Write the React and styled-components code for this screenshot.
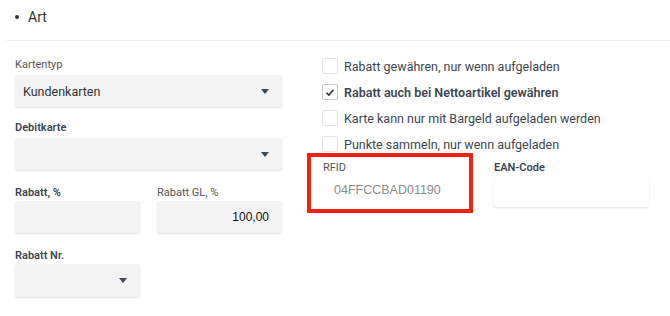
import React from 'react';
import styled, { createGlobalStyle } from 'styled-components';

const GlobalStyle = createGlobalStyle`
  body {
    margin: 0;
    background: #fff;
    font-family: Roboto, "Liberation Sans", sans-serif;
    color: #333;
  }
`;

const Page = styled.div`
  width: 670px;
  height: 316px;
  overflow: hidden;
`;

const Header = styled.div`
  display: flex;
  align-items: center;
  height: 34px;
  padding: 0 0 6px 9px;
  margin-left: 6px;
  border-bottom: 1px solid #f1f1f1;
  font-size: 14px;
  color: #333;
`;

const Bullet = styled.span`
  width: 4px;
  height: 4px;
  border-radius: 50%;
  background: #333;
  margin-right: 9px;
`;

const Body = styled.div`
  display: grid;
  grid-template-columns: 267px 1fr;
  column-gap: 25px;
  padding: 12px 0 0 15px;
`;

const Column = styled.div`
  display: flex;
  flex-direction: column;
  gap: 14px;
  padding-top: ${({ $offset }) => $offset || 0}px;
`;

const Row = styled.div`
  display: grid;
  grid-template-columns: ${({ $cols }) => $cols};
  column-gap: ${({ $gap }) => $gap}px;
  align-items: start;
  margin-top: ${({ $shift }) => $shift || 0}px;
`;

const Field = styled.div`
  display: flex;
  flex-direction: column;
  gap: ${({ $gap }) => ($gap === undefined ? 3 : $gap)}px;
  padding-top: ${({ $top }) => $top || 0}px;
`;

const Label = styled.label`
  height: 14px;
  line-height: 14px;
  font-size: 11px;
  font-weight: ${({ $required }) => ($required ? 600 : 400)};
  color: ${({ $required }) => ($required ? '#3b4652' : '#555')};
`;

const Box = styled.div`
  display: flex;
  align-items: center;
  justify-content: ${({ $align }) => ($align === 'right' ? 'flex-end' : 'space-between')};
  height: ${({ $h }) => $h || 32}px;
  padding: 0 13px 0 8px;
  box-sizing: border-box;
  background: ${({ $white }) => ($white ? '#fff' : '#f3f3f3')};
  border-radius: 3px;
  box-shadow: 0 1px 2px rgba(0, 0, 0, 0.12);
  font-size: 12.5px;
  color: #333;
`;

const Number = styled.span`
  font-family: "Liberation Sans", Arial, sans-serif;
  font-size: 12px;
  color: #111;
`;

const Caret = styled.span`
  width: 0;
  height: 0;
  margin-left: auto;
  border-left: 4px solid transparent;
  border-right: 4px solid transparent;
  border-top: 5px solid #3d4a56;
`;

const Checklist = styled.div`
  display: flex;
  flex-direction: column;
  padding-left: 15px;
`;

const Check = styled.div`
  display: flex;
  align-items: center;
  height: 26px;
  gap: 6px;
  font-size: 12.5px;
  color: #3d4650;
  font-weight: ${({ $checked }) => ($checked ? 600 : 400)};
`;

const Tick = styled.span`
  display: flex;
  align-items: center;
  justify-content: center;
  width: 14px;
  height: 14px;
  border: 1px solid ${({ $checked }) => ($checked ? '#c9c9c9' : '#e4e4e4')};
  border-radius: 2px;
  background: #fff;
  flex-shrink: 0;
`;

const Highlight = styled.div`
  display: flex;
  flex-direction: column;
  height: 60px;
  box-sizing: border-box;
  border: 4px solid #f5220e;
  padding: 4px 0 0 12px;
`;

const PlainValue = styled.span`
  font-family: "Liberation Sans", Arial, sans-serif;
  font-size: 12.5px;
  color: #8a8a8a;
  padding: 8px 0 0 11px;
`;

const CheckIcon = () => (
  <svg width="10" height="9" viewBox="0 0 10 9">
    <path d="M1.5 4.8 L3.9 7 L8.5 1.8" fill="none" stroke="#333" strokeWidth="1.6" />
  </svg>
);

const checks = [
  { text: 'Rabatt gewähren, nur wenn aufgeladen' },
  { text: 'Rabatt auch bei Nettoartikel gewähren', checked: true },
  { text: 'Karte kann nur mit Bargeld aufgeladen werden' },
  { text: 'Punkte sammeln, nur wenn aufgeladen' },
];

export default function App() {
  return (
    <Page>
      <GlobalStyle />
      <Header>
        <Bullet />
        Art
      </Header>
      <Body>
        <Column $offset={5}>
          <Field>
            <Label>Kartentyp</Label>
            <Box>
              Kundenkarten
              <Caret />
            </Box>
          </Field>
          <Field>
            <Label $required>Debitkarte</Label>
            <Box>
              <Caret />
            </Box>
          </Field>
          <Row $cols="125px 125px" $gap={17} $shift={2}>
            <Field $gap={1}>
              <Label $required>Rabatt, %</Label>
              <Box />
            </Field>
            <Field $gap={1}>
              <Label>Rabatt GL, %</Label>
              <Box $align="right">
                <Number>100,00</Number>
              </Box>
            </Field>
          </Row>
          <Row $cols="125px" $gap={0} $shift={2}>
            <Field $gap={1}>
              <Label $required>Rabatt Nr.</Label>
              <Box $h={33}>
                <Caret />
              </Box>
            </Field>
          </Row>
        </Column>
        <Column>
          <Checklist>
            {checks.map((c) => (
              <Check key={c.text} $checked={c.checked}>
                <Tick $checked={c.checked}>{c.checked && <CheckIcon />}</Tick>
                {c.text}
              </Check>
            ))}
          </Checklist>
          <Row $cols="166px 155px" $gap={21} $shift={-18}>
            <Highlight>
              <Label>RFID</Label>
              <PlainValue>04FFCCBAD01190</PlainValue>
            </Highlight>
            <Field $top={8}>
              <Label $required>EAN-Code</Label>
              <Box $white $h={29} />
            </Field>
          </Row>
        </Column>
      </Body>
    </Page>
  );
}
